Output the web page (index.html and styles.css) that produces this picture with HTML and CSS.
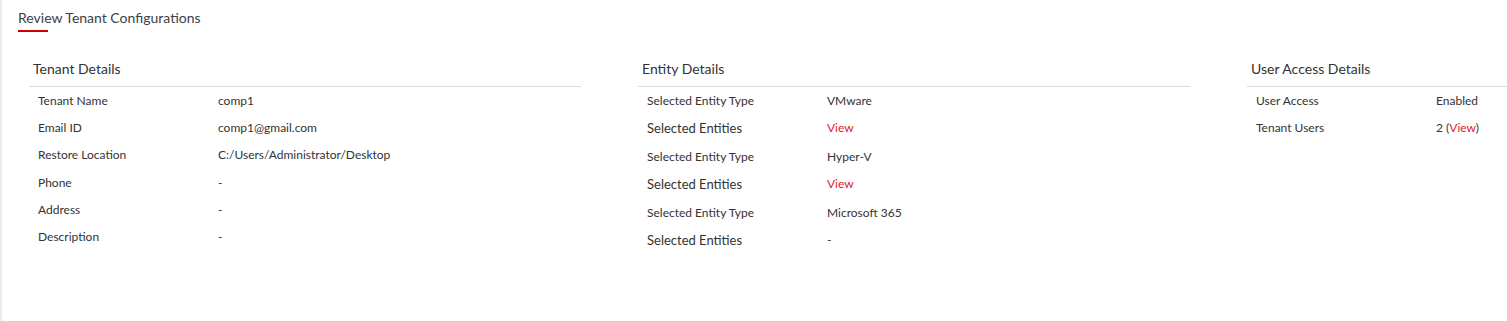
FILE: index.html
```html
<!DOCTYPE html>
<html lang="en">
<head>
    <meta charset="UTF-8">
    <meta name="viewport" content="width=device-width, initial-scale=1.0">
    <title>Review Tenant Configurations</title>
    <link rel="stylesheet" href="styles.css">
</head>
<body>
    <div class="page">
        <div class="tabs">
            <span class="tab active">Review Tenant Configurations</span>
        </div>

        <div class="review-grid">
            <div class="section">
                <h2>Tenant Details</h2>
                <div class="row"><span class="label">Tenant Name</span><span class="value">comp1</span></div>
                <div class="row"><span class="label">Email ID</span><span class="value">comp1@gmail.com</span></div>
                <div class="row"><span class="label">Restore Location</span><span class="value">C:/Users/Administrator/Desktop</span></div>
                <div class="row"><span class="label">Phone</span><span class="value">-</span></div>
                <div class="row"><span class="label">Address</span><span class="value">-</span></div>
                <div class="row"><span class="label">Description</span><span class="value">-</span></div>
            </div>

            <div class="section">
                <h2>Entity Details</h2>
                <div class="row"><span class="label">Selected Entity Type</span><span class="value">VMware</span></div>
                <div class="row large"><span class="label">Selected Entities</span><span class="value"><a href="#" class="link">View</a></span></div>
                <div class="row"><span class="label">Selected Entity Type</span><span class="value">Hyper-V</span></div>
                <div class="row large"><span class="label">Selected Entities</span><span class="value"><a href="#" class="link">View</a></span></div>
                <div class="row"><span class="label">Selected Entity Type</span><span class="value">Microsoft 365</span></div>
                <div class="row large"><span class="label">Selected Entities</span><span class="value">-</span></div>
            </div>

            <div class="section">
                <h2>User Access Details</h2>
                <div class="row"><span class="label">User Access</span><span class="value">Enabled</span></div>
                <div class="row"><span class="label">Tenant Users</span><span class="value">2 (<a href="#" class="link">View</a>)</span></div>
            </div>
        </div>
    </div>
</body>
</html>
```

FILE: styles.css
```css
* {
    box-sizing: border-box;
    font-family: Lato, "Open Sans", sans-serif;
}

html, body {
    margin: 0;
    padding: 0;
    background-color: #ffffff;
    color: #333333;
    overflow: hidden;
}

.page {
    min-height: 100vh;
    border-left: 2px solid #ececec;
    padding: 8px 0 0 16px;
    overflow: hidden;
}

.tabs {
    display: flex;
    height: 30px;
}

.tab {
    position: relative;
    font-size: 14px;
    line-height: 20px;
    color: #3a3f4a;
}

.tab.active::after {
    content: "";
    position: absolute;
    left: 0;
    top: 22px;
    width: 30px;
    height: 2px;
    background-color: #cc0000;
}

.review-grid {
    display: grid;
    grid-template-columns: 552px 552px 552px;
    column-gap: 57px;
    margin-top: 21px;
    padding-left: 11px;
}

.section h2 {
    margin: 0;
    padding: 0 0 7px 4px;
    font-size: 14px;
    font-weight: 400;
    line-height: 20px;
    color: #333333;
    border-bottom: 1px solid #dddddd;
}

.row {
    display: flex;
    padding: 6px 0 6px 9px;
    font-size: 12px;
    line-height: 15.2px;
}

.row.large {
    font-size: 13px;
    line-height: 16.6px;
}

.label {
    width: 180px;
    flex-shrink: 0;
}

.value {
    font-size: 12px;
}

.link {
    color: #e0182d;
    text-decoration: none;
}
```
